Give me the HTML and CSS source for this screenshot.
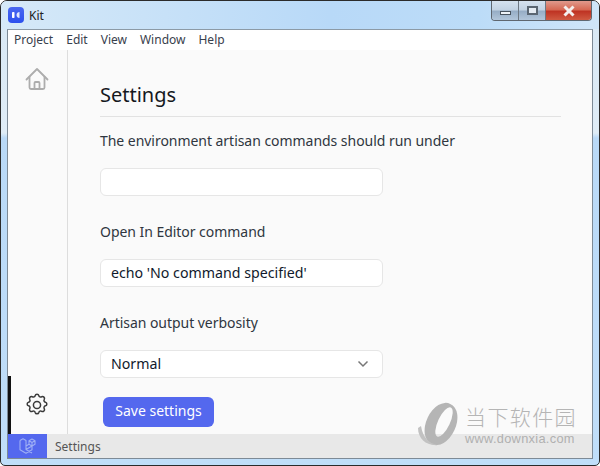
FILE: index.html
```html
<!DOCTYPE html>
<html lang="en">
<head>
<meta charset="utf-8">
<title>Kit</title>
<link rel="stylesheet" href="styles.css">
</head>
<body>
<div class="window">
  <header class="titlebar">
    <span class="app-icon"><svg width="16" height="16" viewBox="0 0 16 16"><rect x="4" y="5" width="2.500" height="6" rx=".8" fill="#fff"/><path d="M11.500 5v6c-1.500 0-3-1.200-3-3s1.500-3 3-3z" fill="#dfe6ff"/></svg></span>
    <span class="app-name">Kit</span>
    <div class="controls">
      <span class="ctl ctl-min"><i></i></span>
      <span class="ctl ctl-max"><i></i></span>
      <span class="ctl ctl-close"><svg width="14" height="12" viewBox="0 0 14 12"><path d="M2.500 1.500l9 9M11.500 1.500l-9 9" stroke="#f4f0ee" stroke-width="3" fill="none"/></svg></span>
    </div>
  </header>
  <div class="client">
    <nav class="menubar">
      <span>Project</span><span>Edit</span><span>View</span><span>Window</span><span>Help</span>
    </nav>
    <div class="body">
      <aside class="rail">
        <svg class="rail-icon" width="24" height="24" viewBox="0 0 24 24" fill="none" stroke="#adadad" stroke-width="1.800" stroke-linejoin="round" stroke-linecap="round"><path d="M1.500 12.500L12 2l10.500 10.500"/><path d="M4.500 10v10.500a1.500 1.500 0 0 0 1.500 1.500h12a1.500 1.500 0 0 0 1.500-1.500V10"/><path d="M9.500 22v-6a1 1 0 0 1 1-1h3a1 1 0 0 1 1 1v6"/></svg>
        <div class="rail-bottom">
          <svg width="26" height="26" viewBox="0 0 24 24" fill="none" stroke="#3a3a3a" stroke-width="1.400" stroke-linejoin="round"><path d="M10.300 2.300c.4-1.700 3-1.700 3.400 0a1.700 1.700 0 0 0 2.600 1.100c1.500-.9 3.300.9 2.400 2.400a1.700 1.700 0 0 0 1.100 2.600c1.700.4 1.700 3 0 3.400a1.700 1.700 0 0 0-1.100 2.600c.9 1.500-.9 3.300-2.400 2.400a1.700 1.700 0 0 0-2.600 1.100c-.4 1.700-3 1.700-3.400 0a1.700 1.700 0 0 0-2.600-1.100c-1.500.9-3.300-.9-2.400-2.400a1.700 1.700 0 0 0-1.100-2.600c-1.700-.4-1.700-3 0-3.400a1.700 1.700 0 0 0 1.100-2.600c-.9-1.500.9-3.300 2.400-2.400a1.700 1.700 0 0 0 2.600-1.100z" transform="translate(0 1)"/><circle cx="12" cy="12" r="3.300"/></svg>
        </div>
      </aside>
      <main class="content">
        <h1 class="title">Settings</h1>
        <label class="label">The environment artisan commands should run under</label>
        <div class="field"></div>
        <label class="label">Open In Editor command</label>
        <div class="field">echo 'No command specified'</div>
        <label class="label">Artisan output verbosity</label>
        <div class="field field-select">Normal
          <svg width="12" height="8" viewBox="0 0 12 8" fill="none" stroke="#777" stroke-width="1.500"><path d="M1.500 1.500L6 6l4.500-4.500"/></svg>
        </div>
        <button class="save">Save settings</button>
      </main>
    </div>
    <footer class="status">
      <span class="status-logo"><svg width="18" height="18" viewBox="0 0 18 18" fill="none" stroke="#9fb0f5" stroke-width="1.100" stroke-linejoin="round"><path d="M1 3.500l3-1.700 3 1.700v9l6 3.400M1 3.500v9.300l6 3.400 6-3.400v-3.500M7 12.500l6-3.500M7 9l3-1.700M10 3.800l3-1.700 3 1.700v3.500l-3 1.700-3-1.700zM13 5.500l3-1.700M13 5.500V9M13 5.500L10 3.800"/></svg></span>
      <span class="status-text">Settings</span>
    </footer>
  </div>
  <div class="watermark">
    <svg width="44" height="44" viewBox="0 0 44 44" fill="#b5b5b5"><path fill-rule="evenodd" d="M33.300 2.100A14 22 25 1 1 14.700 41.900A14 22 25 1 1 33.300 2.100ZM33.800 5.500A6 16 25 1 0 20.200 34.500A6 16 25 1 0 33.800 5.500Z"/><path d="M1 26c0 11 9 18 19 17C12 41 6 36 4 24z" fill="#c2c2c2"/></svg>
    <div class="wm-text">
      <span class="wm-cn">当下软件园</span>
      <span class="wm-url">www.downxia.com</span>
    </div>
  </div>
</div>
</body>
</html>
```

FILE: styles.css
```css
* { box-sizing: border-box; }
html, body { margin: 0; padding: 0; }
body { width: 600px; height: 466px; overflow: hidden; background: #fff; font-family: "Noto Sans", sans-serif; }
.window {
  position: relative;
  width: 600px; height: 466px;
  display: flex; flex-direction: column;
  border: 1px solid #2b2b2b;
  border-radius: 7px 7px 5px 5px;
  background: linear-gradient(180deg, #d8e8f5 0, #dfecf6 132px, #b9d9f7 137px, #c0def9 100%);
  padding: 0 6px 6px 6px;
}
.titlebar { height: 28px; flex: none; display: flex; align-items: center; margin: 0 -6px; padding: 0 6px; border-radius: 6px 6px 0 0; background: linear-gradient(90deg, #d6e9f8 0, #b8d9f8 55%, #bcdcf8 80%, #cfe5f8 100%); }
.app-icon { width: 16px; height: 16px; border-radius: 4px; background: linear-gradient(180deg, #4a68f0, #2c50ee); display: flex; margin-left: 1px; }
.app-name { margin-left: 5px; font-size: 12px; color: #222; }
.controls { margin-left: auto; align-self: flex-start; display: flex; height: 20px; margin-right: 1px; border: 1px solid #5f6770; border-top: 0; border-radius: 0 0 4px 4px; overflow: hidden; }
.ctl { display: flex; align-items: center; justify-content: center; height: 100%; }
.ctl-min, .ctl-max { width: 27px; background: linear-gradient(180deg, #d5e2ef 0, #c3d3e3 45%, #97aec6 55%, #b2c6da 100%); border-right: 1px solid #6d7883; }
.ctl-min i { display: block; width: 11px; height: 4px; margin-top: 5px; background: #eef3f8; border: 1px solid #48535e; }
.ctl-max i { display: block; width: 11px; height: 9px; background: #e4ebf2; border: 2px solid #5a6672; }
.ctl-close { width: 45px; background: linear-gradient(180deg, #e09a8c 0, #d66a55 45%, #bf3424 55%, #d05a42 100%); }
.client { flex: 1; min-height: 0; display: flex; flex-direction: column; border: 1px solid #7d8a96; border-top-color: #8c9aa6; background: #fafafa; position: relative; }
.menubar { height: 20px; flex: none; display: flex; background: #fff; padding-left: 6px; gap: 13px; font-size: 12px; line-height: 20px; color: #38404c; }
.body { flex: 1; min-height: 0; display: flex; }
.rail { width: 60px; flex: none; border-right: 1px solid #ddd; display: flex; flex-direction: column; align-items: center; padding-top: 17px; padding-right: 2px; position: relative; }
.rail-icon { display: block; }
.rail-bottom { margin-top: auto; width: 58px; height: 58px; display: flex; align-items: center; justify-content: center; padding-right: 3px; border-left: 3px solid #111; }
.content { flex: 1; min-width: 0; padding: 31px 31px 0 32px; color: #2f3640; }
.title { margin: 0; font-size: 20px; line-height: 28px; font-weight: 400; color: #15181d; padding-bottom: 7px; border-bottom: 1px solid #e2e2e2; }
.label { display: block; font-size: 14px; line-height: 20px; margin-top: 14px; color: #2f3640; letter-spacing: -.04px; }
.field { width: 283px; height: 28px; margin-top: 17px; background: #fff; border: 1px solid #e6e6e6; border-radius: 6px; font-size: 14.200px; line-height: 26px; padding-left: 10px; color: #111a2c; display: flex; align-items: center; justify-content: space-between; padding-right: 13px; }
.field + .label { margin-top: 26px; }
.save { display: block; margin: 19px 0 0 3px; width: 111px; height: 30px; border: 0; border-radius: 6px; background: #5468ee; color: #fff; font: 14px/28px "Noto Sans", sans-serif; padding: 0 0 2px; }
.status { height: 24px; flex: none; background: #e8e8e8; display: flex; align-items: center; }
.status-logo { width: 39px; height: 100%; background: #5468ee; display: flex; align-items: center; justify-content: center; }
.status-text { margin-left: 8px; font-size: 12px; color: #555; }
.watermark { position: absolute; left: 416px; top: 401px; display: flex; gap: 4px; align-items: center; }
.wm-text { display: flex; flex-direction: column; gap: 4px; }
.wm-cn { font-family: "Noto Sans CJK SC", sans-serif; font-size: 21px; line-height: 24px; letter-spacing: 1.400px; font-weight: 300; color: #b5b5b5; white-space: nowrap; }
.wm-url { font-family: "Liberation Sans", sans-serif; font-size: 12.800px; line-height: 13px; letter-spacing: .3px; color: #b0b0b0; white-space: nowrap; }
```
